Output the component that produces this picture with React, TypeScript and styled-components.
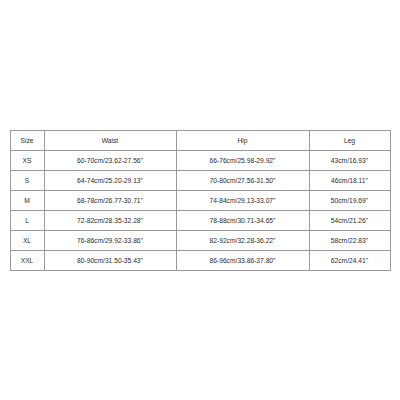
import React from 'react';
import styled, {createGlobalStyle} from 'styled-components';

const GlobalStyle = createGlobalStyle`
  html, body {
    margin: 0;
    padding: 0;
    background: #ffffff;
  }
`;

const Page = styled.div`
  width: 400px;
  height: 400px;
  display: flex;
  align-items: center;
  justify-content: center;
  background: #fff;
`;

const Table = styled.table`
  width: 380px;
  border-collapse: collapse;
  table-layout: fixed;
  font-family: "Liberation Sans", Arial, sans-serif;
  font-size: 6.7px;
  color: #2c2c2c;
`;

const Col = styled.col<{ $w: number }>`
  width: ${p => p.$w}px;
`;

const Cell = styled.td`
  height: 19px;
  padding: 0;
  border: 1px solid #9a9a9a;
  text-align: center;
  vertical-align: middle;
  white-space: nowrap;
`;

const HeadCell = styled(Cell).attrs({as: 'th'})`
  font-weight: normal;
`;

const widths = [34, 132, 133, 81];
const heads = ['Size', 'Waist', 'Hip', 'Leg'];

const rows = [
    ['XS', '60-70cm/23.62-27.56"', '66-76cm/25.98-29.92"', '43cm/16.93"'],
    ['S', '64-74cm/25.20-29.13"', '70-80cm/27.56-31.50"', '46cm/18.11"'],
    ['M', '68-78cm/26.77-30.71"', '74-84cm/29.13-33.07"', '50cm/19.69"'],
    ['L', '72-82cm/28.35-32.28"', '78-88cm/30.71-34.65"', '54cm/21.26"'],
    ['XL', '76-86cm/29.92-33.86"', '82-92cm/32.28-36.22"', '58cm/22.83"'],
    ['XXL', '80-90cm/31.50-35.43"', '86-96cm/33.86-37.80"', '62cm/24.41"'],
];

export default function App() {
    return (
        <Page>
            <GlobalStyle/>
            <Table>
                <colgroup>
                    {widths.map((w, i) => <Col key={i} $w={w}/>)}
                </colgroup>
                <thead>
                <tr>
                    {heads.map((h) => <HeadCell key={h}>{h}</HeadCell>)}
                </tr>
                </thead>
                <tbody>
                {rows.map((r) => (
                    <tr key={r[0]}>
                        {r.map((v, i) => <Cell key={i}>{v}</Cell>)}
                    </tr>
                ))}
                </tbody>
            </Table>
        </Page>
    );
}
